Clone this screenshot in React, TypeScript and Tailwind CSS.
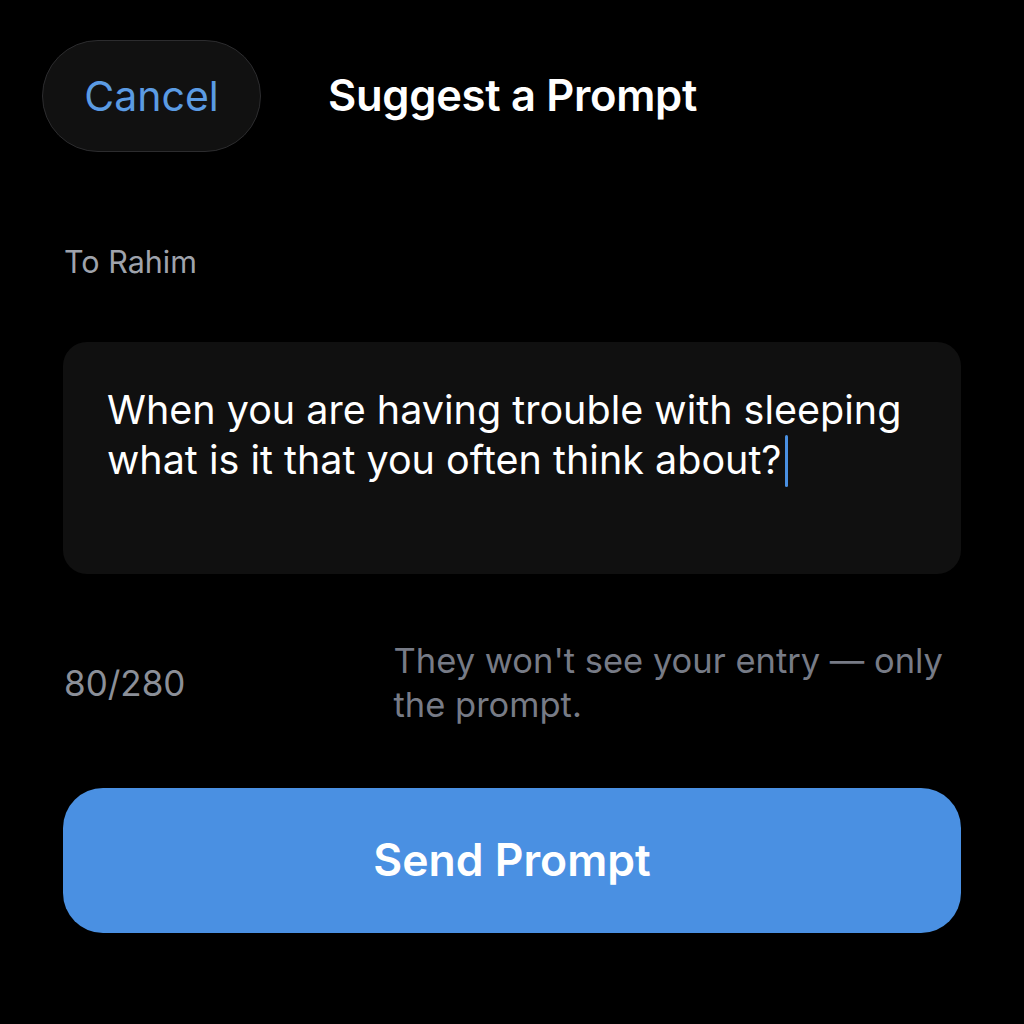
import React from 'react';

const font = { fontFamily: 'Inter, "Noto Sans", sans-serif' };

const App: React.FC = () => {
  return (
    <div className="w-[1024px] h-[1024px] bg-black text-white overflow-hidden" style={font}>
      <div className="flex items-center pt-[40px] pl-[42px]">
        <button className="w-[219px] h-[112px] rounded-full bg-[#111111] border border-[#2c2c2e] text-[#5b9be3] text-[41px] flex items-center justify-center pt-px">
          Cancel
        </button>
        <h1 className="ml-[67px] text-[43.5px] font-semibold tracking-[-0.3px]">Suggest a Prompt</h1>
      </div>

      <div className="px-[63px]">
        <p className="mt-[92px] text-[30.5px] leading-[36px] text-[#9fa3ac] pl-px">To Rahim</p>

        <div className="mt-[62px] h-[232px] rounded-[24px] bg-[#101010] pl-[44px] pr-[40px] pt-[43px]">
          <p className="text-[39.5px] leading-[50px] text-white">
            When you are having trouble with sleeping what is it that you often think about?
            <span className="inline-block w-[3px] h-[52px] bg-[#4a90e2] align-middle -mt-[4px] ml-[3px] rounded-full" />
          </p>
        </div>

        <div className="mt-[65px] flex items-center">
          <span className="w-[332px] text-[35px] text-[#8b8f98] pl-px">80/280</span>
          <p className="text-[34.5px] leading-[44px] text-[#777b86] w-[570px]">
            They won't see your entry — only the prompt.
          </p>
        </div>

        <button className="mt-[61px] w-full h-[145px] rounded-[40px] bg-[#4a90e2] text-[44.5px] font-semibold text-white">
          Send Prompt
        </button>
      </div>
    </div>
  );
};

export default App;
